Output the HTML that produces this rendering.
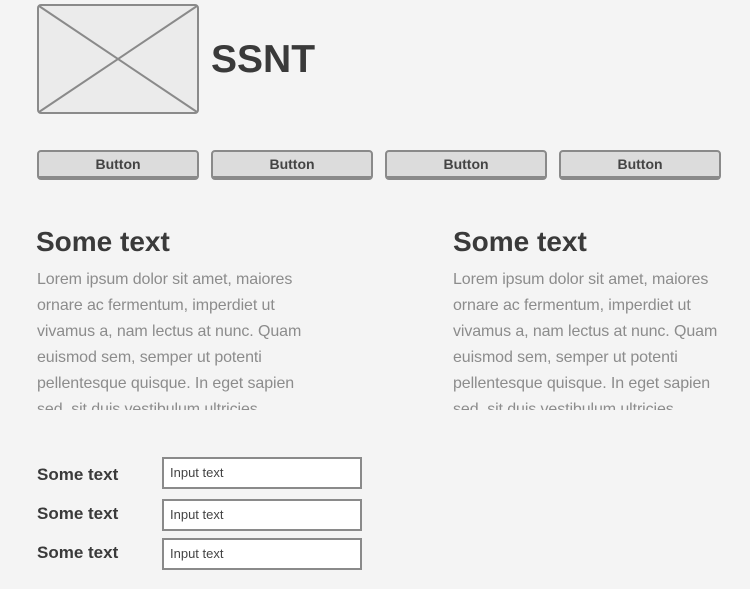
<!DOCTYPE html>
<html><head><style>
body{margin:0;width:750px;height:589px;background:#f4f4f4;font-family:"Liberation Sans",sans-serif;position:relative;overflow:hidden}
.a{position:absolute}
.btn{position:absolute;top:150px;background:#dcdcdc;border:2px solid #8a8a8a;border-bottom-width:4px;border-radius:4px;font-size:14px;font-weight:bold;color:#444;text-align:center;line-height:25px;width:158px;height:24px}
.h{font-size:28px;font-weight:bold;color:#3a3a3a;top:226px}
.p{top:267px;font-size:16px;line-height:26px;color:#8c8c8c;height:143px;overflow:hidden;white-space:nowrap;letter-spacing:-0.1px}
.l{left:37px;font-size:17px;font-weight:bold;color:#3a3a3a}
.in{position:absolute;left:162px;border:2px solid #8a8a8a;background:#fff;font-size:13px;color:#444;line-height:27px;padding-left:6px;box-sizing:border-box;width:200px;height:32px}
</style></head><body>
<svg class="a" style="left:37px;top:4px" width="162" height="110"><rect x="1" y="1" width="160" height="108" rx="3" fill="#ebebeb" stroke="#8a8a8a" stroke-width="2"/><path d="M2 2L160 108M160 2L2 108" stroke="#8a8a8a" stroke-width="2"/></svg>
<div class="a" style="left:211px;top:38px;font-size:39px;font-weight:bold;color:#3a3a3a">SSNT</div>
<div class="btn" style="left:37px">Button</div>
<div class="btn" style="left:211px">Button</div>
<div class="btn" style="left:385px">Button</div>
<div class="btn" style="left:559px">Button</div>
<div class="a h" style="left:36px">Some text</div>
<div class="a h" style="left:453px">Some text</div>
<div class="a p" style="left:37px">Lorem ipsum dolor sit amet, maiores<br>ornare ac fermentum, imperdiet ut<br>vivamus a, nam lectus at nunc. Quam<br>euismod sem, semper ut potenti<br>pellentesque quisque. In eget sapien<br>sed, sit duis vestibulum ultricies.</div>
<div class="a p" style="left:453px">Lorem ipsum dolor sit amet, maiores<br>ornare ac fermentum, imperdiet ut<br>vivamus a, nam lectus at nunc. Quam<br>euismod sem, semper ut potenti<br>pellentesque quisque. In eget sapien<br>sed, sit duis vestibulum ultricies.</div>
<div class="a l" style="top:465px">Some text</div>
<div class="a l" style="top:504px">Some text</div>
<div class="a l" style="top:543px">Some text</div>
<div class="in" style="top:457px">Input text</div>
<div class="in" style="top:499px">Input text</div>
<div class="in" style="top:538px">Input text</div>
</body></html>
